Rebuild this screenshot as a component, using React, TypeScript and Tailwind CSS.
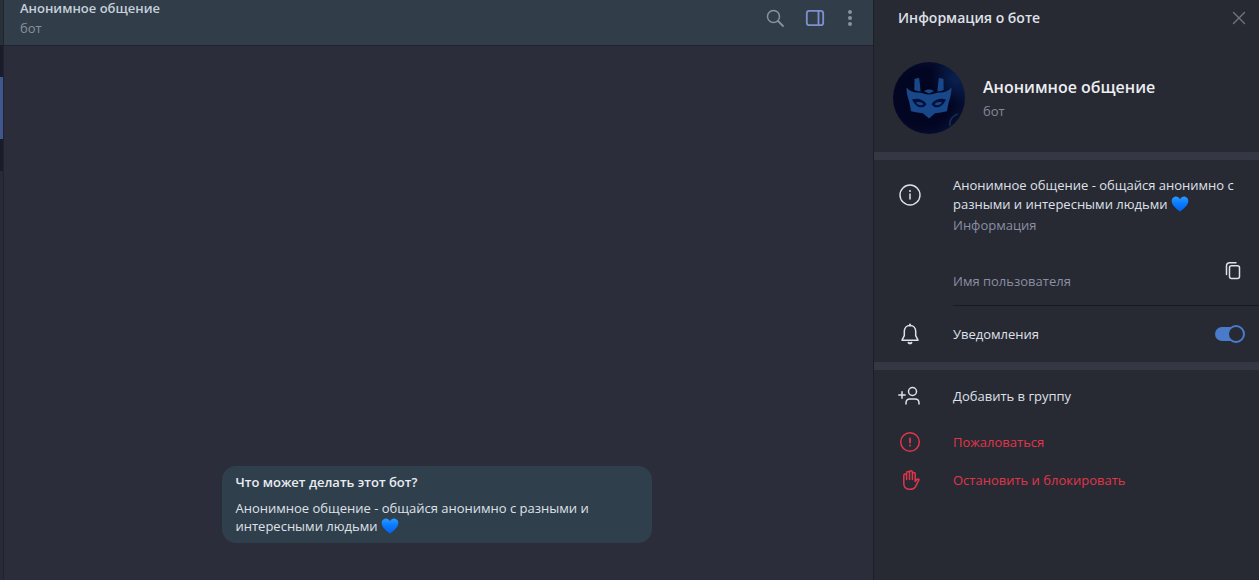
import { useState } from 'react'
import type { ReactNode } from 'react'

const BOT_NAME = 'Анонимное общение'

function Heart({ className }: { className: string }) {
  return (
    <svg role="img" aria-label="синее сердце" viewBox="0 0 18 18" className={className}>
      <defs>
        <linearGradient id="heart" x1="0" y1="0" x2="0" y2="1">
          <stop offset="0" stopColor="#2a9cff" />
          <stop offset="0.45" stopColor="#0a7bff" />
          <stop offset="1" stopColor="#0560ee" />
        </linearGradient>
      </defs>
      <path
        d="M9 4.2C7.9 1.9 5.700 1.200 3.800 1.700 1.600 2.300.4 4.200.7 6.600c.5 4.200 4.700 7.400 8.300 10.100 3.600-2.700 7.800-5.900 8.300-10.100.3-2.400-.9-4.300-3.100-4.900C12.300 1.200 10.100 1.900 9 4.200Z"
        fill="url(#heart)"
      />
    </svg>
  )
}

function Avatar() {
  return (
    <svg role="img" aria-label={BOT_NAME} viewBox="0 0 72 72" className="size-[72px] shrink-0">
      <defs>
        <radialGradient id="night" cx="0.42" cy="0.5" r="0.62">
          <stop offset="0" stopColor="#02041c" />
          <stop offset="0.65" stopColor="#030623" />
          <stop offset="1" stopColor="#071236" />
        </radialGradient>
        <radialGradient id="glow" cx="0.86" cy="0.24" r="0.34">
          <stop offset="0" stopColor="#0b2a60" stopOpacity="0.7" />
          <stop offset="1" stopColor="#0b2a60" stopOpacity="0" />
        </radialGradient>
      </defs>
      <circle cx="36" cy="36" r="36" fill="url(#night)" />
      <circle cx="36" cy="36" r="36" fill="url(#glow)" />
      <path d="M57 64c-1-6 2-10 8-12" stroke="#1b2f4a" strokeWidth="1.5" fill="none" />
      <g fill="#18478a">
        <path d="M21.500 17l4.500-1.300.8 5.300.8 8.500c-2.500-.2-4.500-.6-6.300-1.500z" />
        <path d="M50.500 17l-4.500-1.300-.8 5.300-.8 8.500c2.500-.2 4.500-.6 6.300-1.500z" />
        <path d="M31 29.200c2-2.200 8-2.200 10 0l-5 2.200z" />
        <path d="M13.500 25.500c3 3.500 6.500 4.800 11 5 4.500.1 8 2 11.500 2s7-1.900 11.500-2c4.500-.2 8-1.500 11-5 0 5-1 9.500-2.500 13.500-.8 3.500-1.500 7-2 10.300-4 1-8 1.500-12 2L36 56.500l-6-5.200c-4-.5-8-1-12-2-.5-3.300-1.200-6.800-2-10.300-1.500-4-2.500-8.500-2.500-13.500Z" />
      </g>
      <g fill="#04103c">
        <path d="M19 37.500c5.500-1.500 10.500-.5 14.500 4.500-1.200 2.500-3 3.300-5.500 3.300-3.800 0-6.500-3-9-7.800Z" />
        <path d="M53 37.500c-5.500-1.500-10.500-.5-14.500 4.500 1.200 2.500 3 3.300 5.500 3.300 3.800 0 6.500-3 9-7.800Z" />
      </g>
      <g fill="#18478a">
        <path d="M23 40.500c3-1 6-.3 7.500 1.700-2.300 1.700-5.500 1.200-7.500-1.700Z" />
        <path d="M49 40.500c-3-1-6-.3-7.500 1.700 2.300 1.700 5.500 1.200 7.500-1.700Z" />
      </g>
    </svg>
  )
}

function Icon({ children, className = 'size-6' }: { children: ReactNode; className?: string }) {
  return (
    <svg
      aria-hidden="true"
      viewBox="0 0 24 24"
      fill="none"
      stroke="currentColor"
      strokeWidth="1.5"
      strokeLinecap="round"
      strokeLinejoin="round"
      className={`shrink-0 ${className}`}
    >
      {children}
    </svg>
  )
}

function ActionRow({ icon, label, danger }: { icon: ReactNode; label: string; danger?: boolean }) {
  return (
    <button
      type="button"
      className={`flex h-[38px] w-full items-center gap-[31px] pl-6 text-left hover:bg-white/5 ${danger ? 'text-[#e0364a]' : 'text-[#dfe1e8]'}`}
    >
      {icon}
      {label}
    </button>
  )
}

export default function App() {
  const [notify, setNotify] = useState(true)

  return (
    <div className="flex min-h-screen bg-[#2b2d3b] font-['Open_Sans','Noto_Sans',sans-serif] text-[13px] text-[#dfe1e8]">
      {/* Edge of the chat list */}
      <div className="flex w-1 shrink-0 flex-col border-r border-[#20222e] bg-[#282a37]">
        <div className="h-[45px] bg-[#283038]" />
        <div className="h-8 bg-[#191c2b]" />
        <div className="h-[62px] bg-[#40568f]" />
        <div className="h-8 bg-[#191c2b]" />
      </div>

      <main className="flex min-w-0 flex-1 flex-col">
        <header className="flex h-[46px] justify-between border-b border-[#20232f] bg-[#313d48] pr-3 pl-4">
          <div>
            <h1 className="leading-4 font-semibold text-[#c6d0dc]">{BOT_NAME}</h1>
            <p className="mt-0.5 leading-5 text-[#87929f]">бот</p>
          </div>
          <div className="flex h-9 items-center gap-4 text-[#8793a3]">
            <button type="button" aria-label="Поиск">
              <Icon>
                <circle cx="10.5" cy="10.5" r="6" />
                <path d="M15 15l5 5" strokeWidth="1.8" />
              </Icon>
            </button>
            <button type="button" aria-label="Информация" className="text-[#7f90d2]">
              <Icon>
                <rect x="3.8" y="4.8" width="16.4" height="14.4" rx="2.5" strokeWidth="1.8" />
                <path d="M15.500 5v14" strokeWidth="1.8" />
              </Icon>
            </button>
            <button type="button" aria-label="Меню" className="-ml-1">
              <Icon className="size-[22px]">
                <g fill="currentColor" stroke="none">
                  <circle cx="12" cy="5.500" r="2.200" />
                  <circle cx="12" cy="12" r="2.200" />
                  <circle cx="12" cy="18.500" r="2.200" />
                </g>
              </Icon>
            </button>
          </div>
        </header>

        <div className="flex flex-1 flex-col items-center justify-end pr-5 pb-[37px] pl-4">
          <section className="w-full max-w-[430px] rounded-[14px] bg-[#303f4c] px-3.5 py-2">
            <h2 className="mb-[9px] leading-4 font-semibold text-[#e9edf2]">Что может делать этот бот?</h2>
            <p className="pr-10 leading-[18px]">
              Анонимное общение - общайся анонимно с разными и интересными людьми{' '}
              <Heart className="inline-block size-[18px] align-top" />
            </p>
          </section>
        </div>
      </main>

      <aside className="w-[386px] shrink-0 border-l border-[#1c1e28] bg-[#272933]">
        <div className="flex h-9 items-center justify-between pr-2 pl-6">
          <h2 className="text-sm font-semibold">Информация о боте</h2>
          <button type="button" aria-label="Закрыть" className="text-[#707583]">
            <Icon>
              <path d="M6.500 6.500l11 11M17.500 6.500l-11 11" strokeWidth="1.4" />
            </Icon>
          </button>
        </div>

        <div className="flex items-center gap-[18px] pt-[26px] pb-[18px] pl-[19px]">
          <Avatar />
          <div>
            <h3 className="text-base leading-6 font-semibold text-[#eceef2]">{BOT_NAME}</h3>
            <p className="mt-0.5 leading-5 text-[#868a98]">бот</p>
          </div>
        </div>

        <div className="h-2 bg-[#353745]" />

        <div className="flex gap-[31px] pt-4 pl-6">
          <Icon className="mt-[7px] size-6">
            <circle cx="12" cy="12" r="10" strokeWidth="1.4" />
            <path d="M12 11v5" />
            <circle cx="12" cy="8" r="1" fill="currentColor" stroke="none" />
          </Icon>
          <div className="min-w-0 flex-1">
            <p className="pr-5 leading-[19px]">
              Анонимное общение - общайся анонимно с разными и интересными людьми{' '}
              <Heart className="inline-block size-[18px] align-top" />
            </p>
            <p className="mt-0.5 leading-[19px] text-[#8a8fa2]">Информация</p>
            <div className="mt-6 flex items-start justify-between border-b border-[#171923] pr-3.5 pb-3.5">
              <span className="mt-3 leading-5 text-[#8a8fa2]">Имя пользователя</span>
              <button type="button" aria-label="Скопировать имя пользователя">
                <Icon>
                  <rect x="8.500" y="6.700" width="10" height="12.800" rx="2" />
                  <path d="M5.500 15.500V7a3.300 3.300 0 0 1 3.300-3.300H15" />
                </Icon>
              </button>
            </div>
          </div>
        </div>

        <label className="flex h-14 cursor-pointer items-center gap-[31px] pr-3.5 pl-6">
          <Icon>
            <path d="M12 3.500c-3.600 0-5.700 2.700-5.700 6v4.200L4 18.200h16l-2.300-4.500V9.500c0-3.300-2.100-6-5.700-6Z" />
            <path d="M12 2.500v1" strokeWidth="2" />
            <path d="M10.500 20.700c.8.700 2.200.7 3 0" strokeWidth="1.8" />
          </Icon>
          <span className="flex-1 pt-0.5">Уведомления</span>
          <input
            type="checkbox"
            role="switch"
            checked={notify}
            onChange={(e) => setNotify(e.target.checked)}
            className="peer sr-only"
          />
          <span className="flex h-3.5 w-[30px] items-center rounded-full bg-[#5b6070] bg-clip-content pr-1 text-[#5b6070] peer-checked:justify-end peer-checked:bg-[#4a7bcb] peer-checked:text-[#4a7bcb]">
            <span className="-mr-1 size-[18px] shrink-0 rounded-full border-2 border-current bg-[#272933]" />
          </span>
        </label>

        <div className="h-2 bg-[#353745]" />

        <div className="pt-2">
          <ActionRow
            label="Добавить в группу"
            icon={
              <Icon>
                <circle cx="14.500" cy="6.500" r="4" />
                <path d="M8 19v-1c0-2.300 1.500-4 4-4h5c2.500 0 4 1.700 4 4v1M.8 10h6.400M4 6.800v6.400" />
              </Icon>
            }
          />
          <div className="mt-2">
            <ActionRow
              danger
              label="Пожаловаться"
              icon={
                <Icon>
                  <circle cx="12" cy="11" r="9.300" />
                  <path d="M12 7.500v4" strokeWidth="1.8" />
                  <circle cx="12" cy="14.500" r="1" fill="currentColor" stroke="none" />
                </Icon>
              }
            />
            <ActionRow
              danger
              label="Остановить и блокировать"
              icon={
                <Icon>
                  <path d="M5.800 14.500V6.500a1.400 1.400 0 0 1 2.800 0V10.500M8.600 10.500V4a1.450 1.450 0 0 1 2.900 0v6.500M11.500 10V3.300a1.450 1.450 0 0 1 2.900 0V10.500M14.400 10.500V5a1.400 1.400 0 0 1 2.800 0v7.500l1.300-1.800c.7-.9 1.800-.8 2.500-.1-1.300 2.500-2.300 5-3.600 7.200-1 1.700-2.800 2.500-5.400 2.500-3.800 0-6.200-2-6.200-5.800" />
                </Icon>
              }
            />
          </div>
        </div>
      </aside>
    </div>
  )
}
